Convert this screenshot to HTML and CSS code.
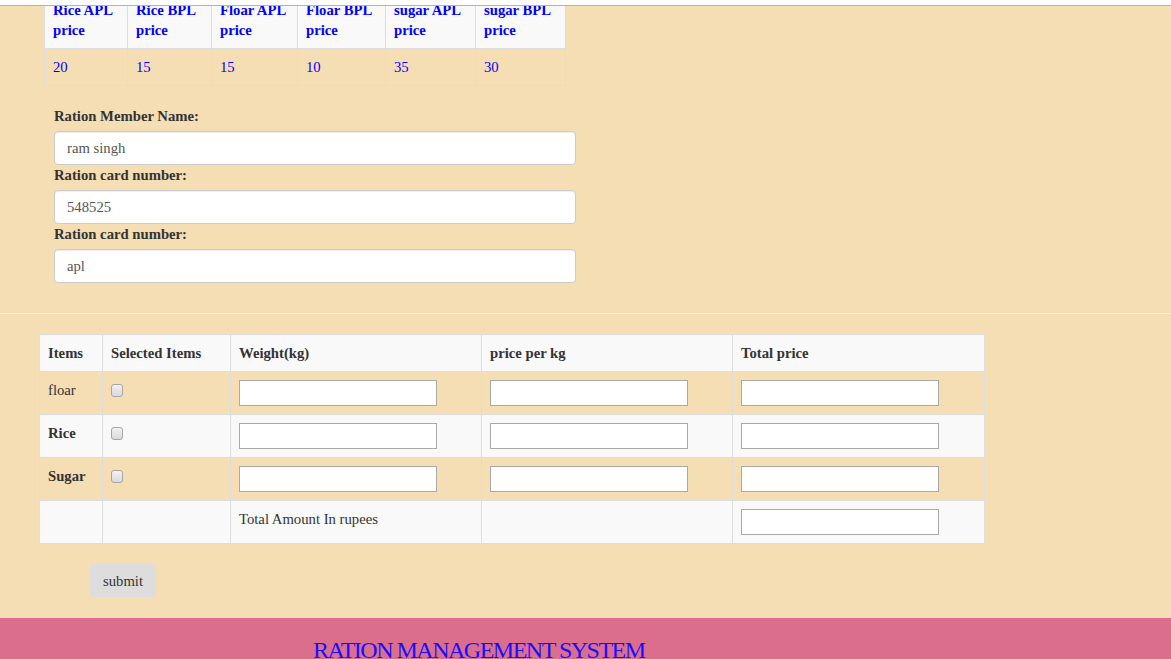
FILE: index.html
```html
<!DOCTYPE html>
<html lang="en">
<head>
<meta charset="utf-8">
<title>Ration Management System</title>
<link rel="stylesheet" href="styles.css">
</head>
<body>
<div class="topbar"></div>
<main class="page">
  <section class="prices">
    <table class="price-table">
      <colgroup>
        <col class="pc1"><col class="pc2"><col class="pc3"><col class="pc4"><col class="pc5"><col class="pc6">
      </colgroup>
      <thead>
        <tr>
          <th>Rice APL price</th>
          <th>Rice BPL price</th>
          <th>Floar APL price</th>
          <th>Floar BPL price</th>
          <th>sugar APL price</th>
          <th>sugar BPL price</th>
        </tr>
      </thead>
      <tbody>
        <tr>
          <td>20</td><td>15</td><td>15</td><td>10</td><td>35</td><td>30</td>
        </tr>
      </tbody>
    </table>

    <form class="member-form">
      <label class="field-label">Ration Member Name:</label>
      <input class="field-input" type="text" value="ram singh">
      <label class="field-label">Ration card number:</label>
      <input class="field-input" type="text" value="548525">
      <label class="field-label">Ration card number:</label>
      <input class="field-input" type="text" value="apl">
    </form>
  </section>

  <hr class="divider">

  <section class="order">
    <table class="order-table">
      <colgroup>
        <col class="oc1"><col class="oc2"><col class="oc3"><col class="oc4"><col class="oc5">
      </colgroup>
      <tbody>
        <tr class="head-row">
          <th>Items</th>
          <th>Selected Items</th>
          <th>Weight(kg)</th>
          <th>price per kg</th>
          <th>Total price</th>
        </tr>
        <tr>
          <td>floar</td>
          <td><input class="check" type="checkbox"></td>
          <td><input class="cell-input" type="text"></td>
          <td><input class="cell-input" type="text"></td>
          <td><input class="cell-input" type="text"></td>
        </tr>
        <tr>
          <th>Rice</th>
          <td><input class="check" type="checkbox"></td>
          <td><input class="cell-input" type="text"></td>
          <td><input class="cell-input" type="text"></td>
          <td><input class="cell-input" type="text"></td>
        </tr>
        <tr>
          <th>Sugar</th>
          <td><input class="check" type="checkbox"></td>
          <td><input class="cell-input" type="text"></td>
          <td><input class="cell-input" type="text"></td>
          <td><input class="cell-input" type="text"></td>
        </tr>
        <tr>
          <td></td>
          <td></td>
          <td>Total Amount In rupees</td>
          <td></td>
          <td><input class="cell-input" type="text"></td>
        </tr>
      </tbody>
    </table>

    <div class="actions">
      <button class="submit-btn" type="button">submit</button>
    </div>
  </section>
</main>
<footer class="footer">
  <h1 class="footer-title">RATION MANAGEMENT SYSTEM</h1>
</footer>
</body>
</html>
```

FILE: styles.css
```css
html, body {
  margin: 0;
  padding: 0;
}

body {
  background: #f5deb3;
  font-family: "Liberation Serif", "Times New Roman", serif;
  font-size: 14.7px;
  line-height: 20px;
  color: #333;
}

.topbar {
  height: 5px;
  background: #fff;
  border-bottom: 1px solid #b4b4b4;
}

.page {
  overflow: hidden;
}

.prices {
  padding-left: 44px;
}

table {
  border-collapse: collapse;
  border-spacing: 0;
  table-layout: fixed;
}

th, td {
  padding: 8px;
  border: 1px solid #ddd;
  text-align: left;
  vertical-align: top;
}

th {
  font-weight: bold;
}

/* price table */
.price-table {
  width: 522px;
  margin-top: -15px;
  color: #0000ff;
}

.price-table thead th {
  background: #f9f9f9;
}

.pc1 { width: 83px; }
.pc2 { width: 84px; }
.pc3 { width: 86px; }
.pc4 { width: 88px; }
.pc5 { width: 90px; }
.pc6 { width: 90px; }

/* member form */
.member-form {
  display: flex;
  flex-direction: column;
  width: 522px;
  margin: 20px 0 0 10px;
}

.field-label {
  display: block;
  font-weight: bold;
  margin-bottom: 5px;
  color: #333;
}

.field-input {
  box-sizing: border-box;
  width: 522px;
  height: 34px;
  padding: 6px 12px;
  border: 1px solid #ccc;
  border-radius: 4px;
  background: #fff;
  box-shadow: inset 0 1px 1px rgba(0, 0, 0, 0.075);
  font-family: inherit;
  font-size: 14.7px;
  color: #555;
  margin: 0;
}

.divider {
  margin: 30px 0 20px;
  border: 0;
  border-top: 1px solid #faf0e0;
  height: 0;
}

/* order table */
.order {
  padding-left: 39px;
}

.order-table {
  width: 946px;
}

.oc1 { width: 63px; }
.oc2 { width: 128px; }
.oc3 { width: 251px; }
.oc4 { width: 251px; }
.oc5 { width: 252px; }

.order-table tr:nth-child(odd) {
  background: #f9f9f9;
}

.cell-input {
  box-sizing: border-box;
  display: block;
  width: 198px;
  height: 26px;
  margin: 0;
  padding: 1px 4px;
  border: 1px solid #a9a9a9;
  background: #fff;
  font-family: inherit;
  font-size: 14px;
}

.check {
  appearance: none;
  -webkit-appearance: none;
  display: block;
  box-sizing: border-box;
  width: 12px;
  height: 13px;
  margin: 4px 0 0 0;
  border: 1px solid #a6a6a6;
  border-radius: 3px;
  background: linear-gradient(#f2f2f2, #d9d9d9);
}

.actions {
  display: flex;
  padding: 20px 0 21px 51px;
}

.submit-btn {
  height: 33px;
  padding: 7px 13px 5px;
  border: none;
  border-radius: 4px;
  background: #ddd;
  font-family: inherit;
  font-size: 14.7px;
  color: #333;
}

/* footer */
.footer {
  background: #db6d8d;
  height: 120px;
  padding: 18px 0 0 313px;
}

.footer-title {
  margin: 0;
  font-weight: normal;
  font-size: 24px;
  line-height: 29px;
  letter-spacing: -1.5px;
  color: #1a0dff;
}
```
